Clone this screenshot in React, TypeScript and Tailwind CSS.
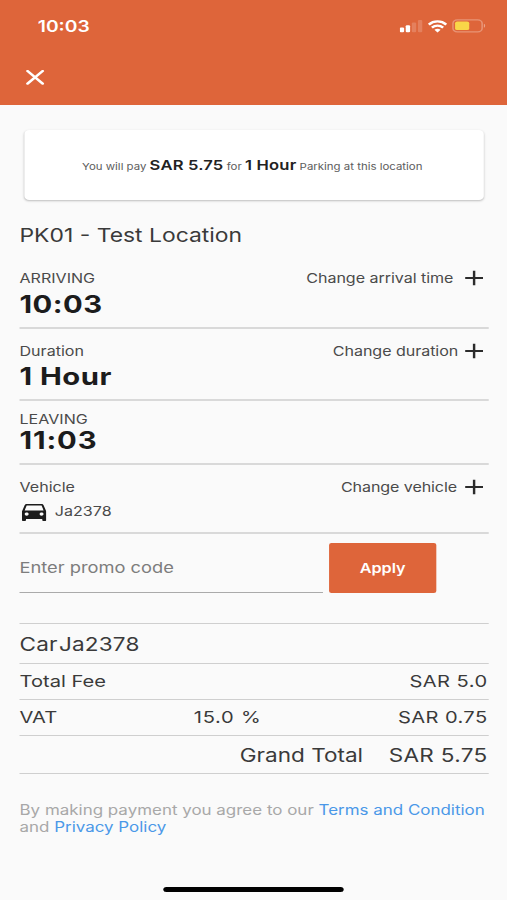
import React from 'react';

interface SectionProps {
  label: string;
  action?: string;
  actionClass?: string;
  className: string;
  children: React.ReactNode;
}

const PlusIcon = () => (
  <svg width="16" height="16" viewBox="0 0 16 16" className="shrink-0">
    <path d="M8 0.8V15.2M0.7 8H15.3" stroke="#2b2b2b" strokeWidth="2" fill="none" />
  </svg>
);

const CarIcon = () => (
  <svg width="20" height="17" viewBox="3 4 18 16" preserveAspectRatio="none" className="shrink-0">
    <path
      fill="#1c1c1c"
      d="M18.92 5.01C18.72 4.42 18.16 4 17.5 4h-11c-.66 0-1.21.42-1.42 1.01L3 11v8c0 .55.45 1 1 1h1c.55 0 1-.45 1-1v-1h12v1c0 .55.45 1 1 1h1c.55 0 1-.45 1-1v-8l-2.08-5.99zM6.5 15c-.83 0-1.5-.67-1.5-1.5S5.67 12 6.5 12s1.5.67 1.5 1.5S7.33 15 6.5 15zm11 0c-.83 0-1.5-.67-1.5-1.5s.67-1.5 1.5-1.5 1.5.67 1.5 1.5-.67 1.5-1.5 1.5zM5 10l1.5-4.5h11L19 10H5z"
    />
  </svg>
);

const StatusIcons = () => (
  <div className="flex items-center">
    <svg width="19" height="14" viewBox="0 0 19 14">
      <rect x="0" y="8.5" width="3.6" height="4.7" rx="1" fill="#fff" />
      <rect x="4.9" y="6.3" width="3.6" height="6.9" rx="1" fill="#fff" />
      <rect x="9.9" y="3.6" width="3.6" height="9.6" rx="1" fill="#fff" opacity="0.18" />
      <rect x="14.9" y="1" width="3.6" height="12.2" rx="1" fill="#fff" opacity="0.18" />
    </svg>
    <svg width="16" height="13" viewBox="0 0 17 13" preserveAspectRatio="none" className="ml-[4px]">
      <g fill="none" stroke="#fff" strokeWidth="2.3">
        <path d="M0.9 4.6C5.1 0.4 11.9 0.4 16.1 4.6" />
        <path d="M3.6 7.6C6.4 5 10.6 5 13.4 7.6" />
      </g>
      <path d="M5.8 9.7C7.4 8.4 9.6 8.4 11.2 9.7L8.5 12.5Z" fill="#fff" />
    </svg>
    <svg width="28" height="14" viewBox="0 0 28 14" className="ml-[4px]">
      <rect x="0.6" y="0.8" width="24" height="12" rx="3.6" fill="none" stroke="#fff" strokeOpacity="0.3" strokeWidth="1.3" />
      <rect x="2.4" y="2.6" width="11.6" height="8.4" rx="1.6" fill="#f9d648" />
      <path d="M26 4.8C27.4 5.2 27.4 8.4 26 8.8Z" fill="#fff" fillOpacity="0.4" />
    </svg>
  </div>
);

const Section = ({ label, action, actionClass = '', className, children }: SectionProps) => (
  <section className={`border-b-2 border-[#d9d9d9] ${className}`}>
    <div className="flex h-5 items-center justify-between pr-[4px] text-[13.2px] leading-5 text-[#4a4a4a]">
      <span>{label}</span>
      {action && (
        <button type="button" className="flex items-center">
          <span className={actionClass}>{action}</span>
          <PlusIcon />
        </button>
      )}
    </div>
    {children}
  </section>
);

const App = () => {
  return (
    <div className="h-[900px] w-[507px] overflow-hidden bg-[#fafafa]">
      <div
        className="flex h-[900px] w-[416px] origin-top-left scale-x-[1.21875] flex-col bg-[#fafafa] text-[#3a3a3a]"
        style={{ fontFamily: 'Inter, "Liberation Sans", sans-serif' }}
      >
        <header className="h-[105px] bg-[#de653a] text-white">
          <div className="flex h-[52px] items-center justify-between pr-[17px] pl-[31px]">
            <span className="pt-[2px] text-[15.8px] font-semibold">10:03</span>
            <StatusIcons />
          </div>
          <button type="button" aria-label="Close" className="mt-[18px] ml-[21px] block">
            <svg width="16" height="15" viewBox="0 0 16 15">
              <path d="M1.6 1L14 13.6M14 1L1.6 13.6" stroke="#fff" strokeWidth="2.3" strokeLinecap="round" fill="none" />
            </svg>
          </button>
        </header>

        <main className="flex flex-col pr-[15px] pl-4">
          <div className="mx-[4px] mt-[25px] flex h-[70px] items-center justify-center rounded-[4px] bg-white pt-[1px] pr-[3px] shadow-[0_1px_2px_rgba(0,0,0,0.25)]">
            <p className="text-[9.4px] whitespace-nowrap text-[#5c5c5c]">
              You will pay <b className="text-[13.6px] font-semibold tracking-[0.15px] text-[#222]">SAR 5.75</b> for{' '}
              <b className="text-[13.6px] font-semibold tracking-[0.15px] text-[#222]">1 Hour</b> Parking at this location
            </p>
          </div>

          <h1 className="mt-[24px] text-[18.8px] leading-6">PK01 - Test Location</h1>

          <Section
            label="ARRIVING"
            action="Change arrival time"
            actionClass="mr-[9px] tracking-[-0.04px]"
            className="mt-[20px] pb-[8px]"
          >
            <div className="mt-[3px] text-[24px] leading-7 font-bold tracking-[0.4px] text-[#1c1c1c]">10:03</div>
          </Section>

          <Section
            label="Duration"
            action="Change duration"
            actionClass="mr-[5px] tracking-[-0.04px]"
            className="pt-[12px] pb-[8px]"
          >
            <div className="mt-[2px] text-[24px] leading-7 font-bold tracking-[0.4px] text-[#1c1c1c]">1 Hour</div>
          </Section>

          <Section label="LEAVING" className="pt-[8px] pb-[8px]">
            <div className="-mt-[2px] text-[24px] leading-7 font-bold tracking-[0.7px] text-[#1c1c1c]">11:03</div>
          </Section>

          <Section
            label="Vehicle"
            action="Change vehicle"
            actionClass="mr-[6px] tracking-[-0.08px]"
            className="pt-[12px] pb-[10px]"
          >
            <div className="mt-[5px] flex h-5 items-center pl-[2px] text-[13.2px] text-[#4a4a4a]">
              <CarIcon />
              <span className="ml-[7px]">Ja2378</span>
            </div>
          </Section>

          <div className="mt-[9px] flex h-[50px]">
            <input
              type="text"
              placeholder="Enter promo code"
              className="w-[249px] border-b border-[#aaa] pt-[2px] text-[15px] outline-none placeholder:text-[#7d7d7d]"
            />
            <button
              type="button"
              className="ml-[5px] w-[88px] rounded-[2px] bg-[#de653a] pt-[2px] text-[13.3px] font-semibold text-white"
            >
              Apply
            </button>
          </div>

          <div className="mt-[30px] border-t border-[#cfcfcf]">
            <div className="flex h-[40px] items-center border-b border-[#cfcfcf] pt-[2px] text-[18.5px] tracking-[0.15px]">
              <span>Car</span>
              <span className="ml-[1px]">Ja2378</span>
            </div>
            <div className="flex h-[36px] items-center justify-between border-b border-[#cfcfcf] pr-[1px] text-[16.5px]">
              <span>Total Fee</span>
              <span className="tracking-[0.35px]">SAR 5.0</span>
            </div>
            <div className="flex h-[36px] items-center border-b border-[#cfcfcf] pr-[1px] text-[16.5px]">
              <span className="w-[143px]">VAT</span>
              <span className="tracking-[0.6px]">15.0 %</span>
              <span className="ml-auto tracking-[0.3px]">SAR 0.75</span>
            </div>
            <div className="flex h-[38px] items-center justify-end border-b border-[#cfcfcf] pt-[2px] pr-[1px] text-[18.5px]">
              <span>Grand Total</span>
              <span className="ml-[21px] tracking-[0.25px]">SAR 5.75</span>
            </div>
          </div>

          <p className="mt-[28px] text-[13.92px] leading-[17px] whitespace-nowrap text-[#a8a8a8]">
            By making payment you agree to our <a className="text-[#4a98e8]">Terms and Condition</a>
            <br />
            and <a className="text-[#4a98e8]">Privacy Policy</a>
          </p>
        </main>

        <div className="mt-auto mb-[8px] h-[5px] w-[148px] self-center rounded-full bg-black" />
      </div>
    </div>
  );
};

export default App;
